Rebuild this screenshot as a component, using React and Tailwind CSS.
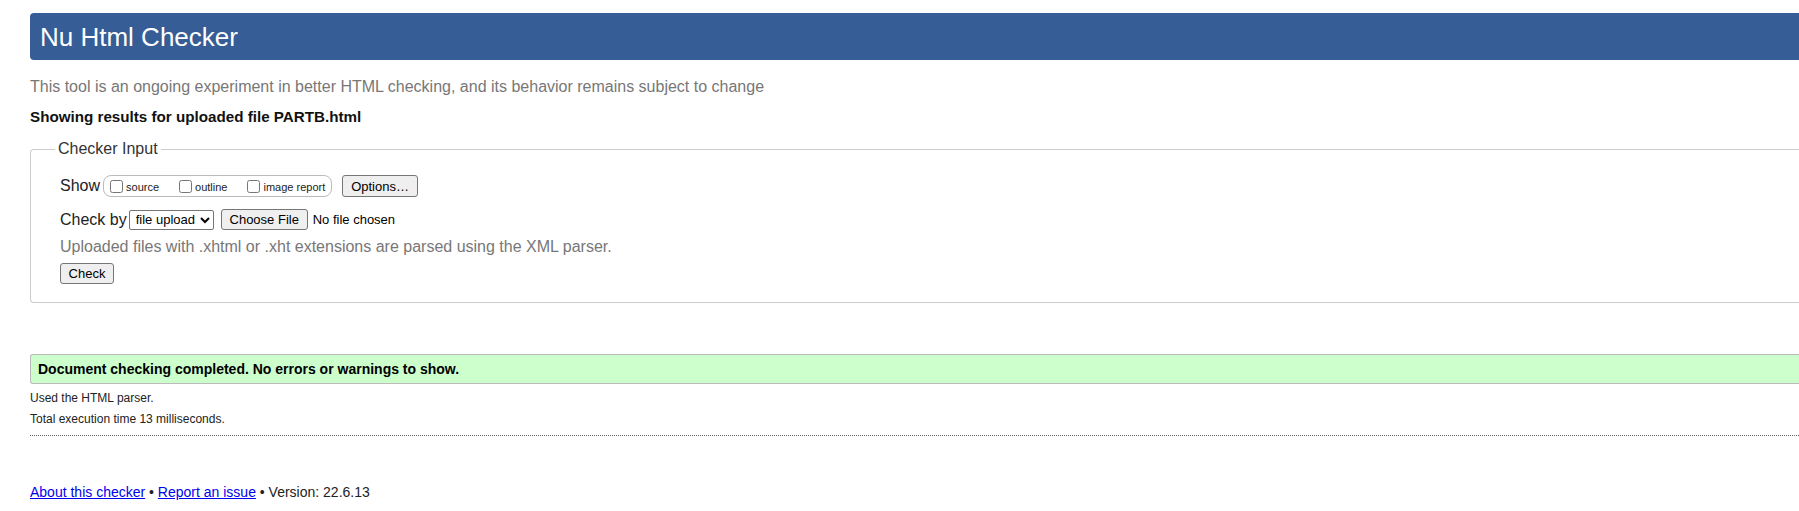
import React from "react";

const Checkbox = ({ label }) => {
  return (
    <label className="flex items-center mr-[20px] last:mr-0">
      <input type="checkbox" className="w-[13px] h-[13px] m-0 mr-[3px]" />
      <span className="text-[11px] leading-none pt-[3px]">{label}</span>
    </label>
  );
};

const NativeButton = ({ children, className }) => {
  return (
    <button
      type="button"
      className={`border border-[#767676] bg-[#efefef] rounded-[3px] text-[13px] leading-none text-black ${className}`}
    >
      {children}
    </button>
  );
};

const App = () => {
  return (
    <div className="overflow-x-hidden bg-white text-[#222]" style={{ fontFamily: '"Liberation Sans", Arial, sans-serif' }}>
      <div className="pl-[30px] -mr-4">
        {/* header */}
        <div className="mt-[13px] h-[47px] bg-[#365d95] rounded-l-[4px] flex items-center pl-[10px]">
          <h1 className="text-white text-[26px] leading-none">Nu Html Checker</h1>
        </div>

        <p className="mt-[17px] text-[16px] leading-[20px] text-[#777]">
          This tool is an ongoing experiment in better HTML checking, and its behavior remains subject to change
        </p>
        <p className="mt-[10px] text-[15.2px] leading-[20px] font-bold text-[#111]">
          Showing results for uploaded file PARTB.html
        </p>

        {/* form */}
        <fieldset className="mt-[12px] border border-[#ccc] rounded-l-[4px] border-r-0 pb-[17px]">
          <legend className="ml-[24px] px-[3px] text-[16px] leading-[20px] text-[#333]">Checker Input</legend>

          <div className="pl-[29px]">
            <div className="mt-[16px] h-[22px] flex items-center">
              <span className="text-[16px] mr-[3px]">Show</span>
              <div className="h-[22px] w-[229px] border border-[#bbb] rounded-[8px] flex items-center pl-[6px]">
                <Checkbox label="source" />
                <Checkbox label="outline" />
                <Checkbox label="image report" />
              </div>
              <NativeButton className="ml-[10px] h-[22px] w-[76px]">Options…</NativeButton>
            </div>

            <div className="mt-[12px] h-[21px] flex items-center">
              <span className="text-[16px] mr-[2px]">Check by</span>
              <select className="h-[20px] w-[85px] border border-[#767676] rounded-[2px] text-[13px] text-black pl-[2px]">
                <option>file upload</option>
              </select>
              <NativeButton className="ml-[7px] h-[21px] w-[87px]">Choose File</NativeButton>
              <span className="ml-[5px] text-[13px] text-black">No file chosen</span>
            </div>

            <p className="mt-[7px] text-[16px] leading-[20px] text-[#777]">
              Uploaded files with .xhtml or .xht extensions are parsed using the XML parser.
            </p>

            <NativeButton className="mt-[6px] h-[21px] w-[54px]">Check</NativeButton>
          </div>
        </fieldset>

        {/* results */}
        <div className="mt-[51px] h-[30px] bg-[#ccffcc] border border-[#bbb] border-r-0 rounded-l-[3px] flex items-center pl-[7px]">
          <span className="text-[14px] font-bold text-black">Document checking completed. No errors or warnings to show.</span>
        </div>
        <p className="mt-[7px] text-[12px] leading-[14px] text-[#222]">Used the HTML parser.</p>
        <p className="mt-[7px] text-[12px] leading-[14px] text-[#222]">Total execution time 13 milliseconds.</p>
        <div className="mt-[9px] border-t border-dotted border-[#666]"></div>

        {/* footer */}
        <p className="mt-[48px] text-[14px] leading-[16px] text-[#222]">
          <a href="#about" className="text-[#0000ee] underline">About this checker</a>
          {" • "}
          <a href="#issue" className="text-[#0000ee] underline">Report an issue</a>
          {" • Version: 22.6.13"}
        </p>
      </div>
    </div>
  );
};

export default App;
